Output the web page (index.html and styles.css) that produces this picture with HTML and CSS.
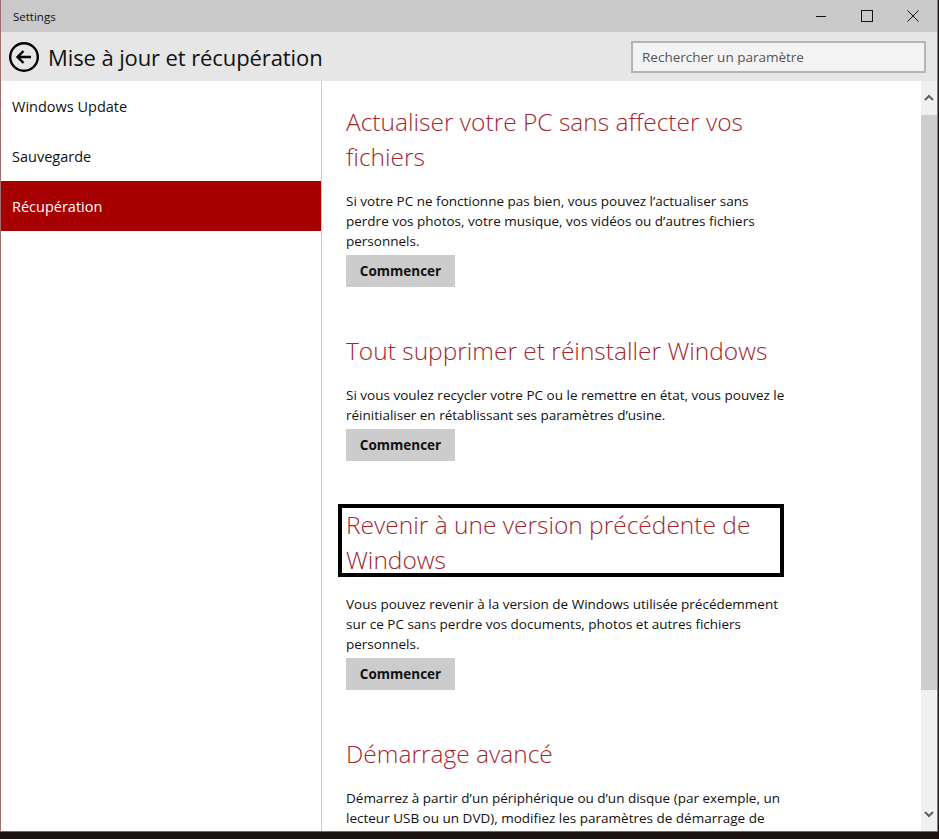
FILE: index.html
```html
<!DOCTYPE html>
<html lang="fr">
<head>
<meta charset="utf-8">
<title>Settings</title>
<link rel="stylesheet" href="styles.css">
</head>
<body>
<div class="window">
  <div class="titlebar">
    <span class="app-name">Settings</span>
    <div class="controls">
      <span class="ctl"><svg width="12" height="12" viewBox="0 0 12 12"><path d="M1 6.5H11" stroke="#111" stroke-width="1"/></svg></span>
      <span class="ctl"><svg width="12" height="12" viewBox="0 0 12 12"><rect x="0.5" y="0.5" width="11" height="11" fill="none" stroke="#111" stroke-width="1"/></svg></span>
      <span class="ctl"><svg width="12" height="12" viewBox="0 0 12 12"><path d="M0.5 0.5L11.5 11.5M11.5 0.5L0.5 11.5" stroke="#111" stroke-width="1"/></svg></span>
    </div>
  </div>
  <div class="header">
    <svg class="back" width="32" height="32" viewBox="0 0 32 32">
      <circle cx="16" cy="16" r="13.8" fill="none" stroke="#000" stroke-width="2.4"/>
      <path d="M23 16H9.5M15.5 10L9.5 16L15.5 22" fill="none" stroke="#000" stroke-width="2.4"/>
    </svg>
    <h1 class="page-title">Mise à jour et récupération</h1>
    <div class="search">Rechercher un paramètre</div>
  </div>
  <div class="main">
    <nav class="nav">
      <div class="nav-item">Windows Update</div>
      <div class="nav-item">Sauvegarde</div>
      <div class="nav-item active">Récupération</div>
    </nav>
    <div class="content">
      <div class="scroll">
        <section class="section">
          <h2 class="sec-title">Actualiser votre PC sans affecter vos fichiers</h2>
          <p class="sec-text">Si votre PC ne fonctionne pas bien, vous pouvez l’actualiser sans perdre vos photos, votre musique, vos vidéos ou d’autres fichiers personnels.</p>
          <button class="btn">Commencer</button>
        </section>
        <section class="section">
          <h2 class="sec-title">Tout supprimer et réinstaller Windows</h2>
          <p class="sec-text">Si vous voulez recycler votre PC ou le remettre en état, vous pouvez le réinitialiser en rétablissant ses paramètres d’usine.</p>
          <button class="btn">Commencer</button>
        </section>
        <section class="section">
          <h2 class="sec-title">Revenir à une version précédente de Windows<span class="annot"></span></h2>
          <p class="sec-text">Vous pouvez revenir à la version de Windows utilisée précédemment sur ce PC sans perdre vos documents, photos et autres fichiers personnels.</p>
          <button class="btn">Commencer</button>
        </section>
        <section class="section">
          <h2 class="sec-title">Démarrage avancé</h2>
          <p class="sec-text">Démarrez à partir d’un périphérique ou d’un disque (par exemple, un lecteur USB ou un DVD), modifiez les paramètres de démarrage de Windows ou restaurez Windows à partir d’une image système.</p>
        </section>
      </div>
      <div class="scrollbar">
        <span class="arrow"><svg width="10" height="8" viewBox="0 0 10 8"><path d="M1 6L5 2L9 6" fill="none" stroke="#606060" stroke-width="2"/></svg></span>
        <div class="track"><div class="thumb"></div></div>
        <span class="arrow"><svg width="10" height="8" viewBox="0 0 10 8"><path d="M1 2L5 6L9 2" fill="none" stroke="#606060" stroke-width="2"/></svg></span>
      </div>
    </div>
  </div>
</div>
</body>
</html>
```
FILE: styles.css
```css
* { box-sizing: border-box; }
html, body { margin: 0; padding: 0; }
body {
  background: #1c1414;
  font-family: "Open Sans", "Noto Sans", "Liberation Sans", sans-serif;
  width: 939px;
  height: 839px;
  overflow: hidden;
}
.window {
  width: 938px;
  height: 832px;
  display: flex;
  flex-direction: column;
  border-left: 1px solid #a07070;
  border-right: 1px solid #a86a6a;
  border-bottom: 1px solid #8a6060;
  background: #fff;
}
.titlebar {
  height: 32px;
  background: #c9c9c9;
  display: flex;
  align-items: center;
  justify-content: space-between;
  padding-left: 12px;
  flex: none;
}
.app-name {
  font-size: 11.5px;
  color: #111;
}
.controls {
  display: flex;
  height: 100%;
  padding-right: 1px;
}
.ctl {
  width: 46px;
  display: flex;
  align-items: center;
  justify-content: center;
}
.header {
  height: 49px;
  background: #e6e6e6;
  display: flex;
  align-items: center;
  padding-left: 7px;
  padding-right: 11px;
  flex: none;
}
.back { flex: none; }
.page-title {
  margin: 0 0 0 8px;
  font-size: 22px;
  font-weight: 400;
  color: #111;
  flex: 1;
  letter-spacing: -0.1px;
}
.search {
  width: 295px;
  height: 32px;
  border: 2px solid #b4b4b4;
  background: #f3f3f3;
  font-size: 13.5px;
  color: #555;
  padding-left: 9px;
  display: flex;
  align-items: center;
}
.main {
  flex: 1;
  display: flex;
  min-height: 0;
}
.nav {
  width: 321px;
  flex: none;
  border-right: 1px solid #cbcbcb;
  background: #fff;
}
.nav-item {
  height: 50px;
  display: flex;
  align-items: center;
  padding-left: 11px;
  font-size: 14.5px;
  color: #111;
}
.nav-item.active {
  background: #a80000;
  color: #fff;
}
.content {
  flex: 1;
  display: flex;
  min-width: 0;
}
.scroll {
  flex: 1;
  overflow: hidden;
  padding: 23px 0 0 24px;
}
.section {
  margin-bottom: 46px;
  max-width: 448px;
}
.sec-title {
  margin: 0;
  font-size: 24.5px;
  font-weight: 300;
  line-height: 35px;
  color: #a4262c;
  position: relative;
}
.annot {
  position: absolute;
  left: -8px;
  top: -3px;
  width: 446px;
  height: 73px;
  border: 4px solid #000;
}
.sec-text {
  margin: 17px 0 0;
  font-size: 13.5px;
  line-height: 20px;
  color: #111;
}
.btn {
  margin-top: 4px;
  width: 109px;
  height: 32px;
  border: 0;
  background: #cccccc;
  font-family: inherit;
  font-weight: 700;
  font-size: 13.5px;
  color: #111;
  padding: 0;
  display: block;
}
.scrollbar {
  width: 16px;
  flex: none;
  background: #f0f0f0;
  display: flex;
  flex-direction: column;
}
.arrow {
  height: 34px;
  display: flex;
  align-items: center;
  justify-content: center;
}
.track {
  flex: 1;
}
.thumb {
  height: 575px;
  background: #cdcdcd;
}
```
